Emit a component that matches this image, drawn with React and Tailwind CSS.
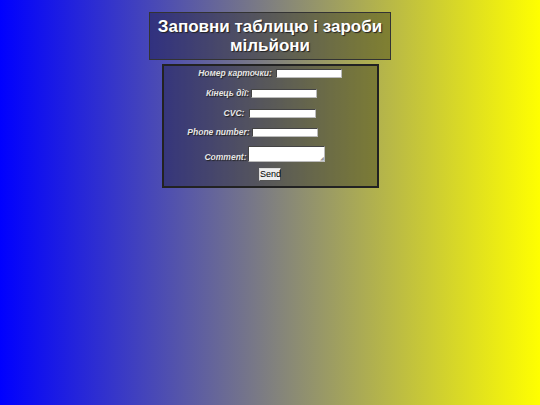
export default function App() {
  const label =
    "text-[8.5px] font-bold italic text-[#e6e6e6] [text-shadow:1px_1px_1px_#222] leading-none";
  const input =
    "h-[9px] bg-white border border-t-[#444] border-l-[#444] border-b-[#bbb] border-r-[#bbb]";
  return (
    <div className="w-[540px] h-[405px] bg-[linear-gradient(to_right,#0000ff,#ffff00)] font-['Liberation_Sans',Arial,sans-serif] flex flex-col items-center pt-[12px]">
      <div className="w-[242px] h-[48px] bg-black/30 border border-[#333] flex flex-col items-center justify-center">
        <h1 className="text-[17px] leading-[19px] font-bold text-white text-center [text-shadow:1px_1px_1px_#222]">
          Заповни таблицю і зароби
          <br />
          мільйони
        </h1>
      </div>
      <div className="w-[217px] h-[124px] mt-[4px] bg-black/30 border-2 border-[#222] flex flex-col items-center pt-[2px]">
        <div className="flex items-center h-[10px]">
          <span className={label + " mr-[4px]"}>Номер карточки:</span>
          <div className={input + " w-[66px]"} />
        </div>
        <div className="flex items-center h-[10px] mt-[10px] mr-[17px]">
          <span className={label + " mr-[2px]"}>Кінець дії:</span>
          <div className={input + " w-[66px]"} />
        </div>
        <div className="flex items-center h-[10px] mt-[10px]">
          <span className={label + " mr-[5px]"}>CVC:</span>
          <div className={input + " w-[67px]"} />
        </div>
        <div className="flex items-center h-[10px] mt-[9px] mr-[35px]">
          <span className={label + " mr-[2px]"}>Phone number:</span>
          <div className={input + " w-[66px]"} />
        </div>
        <div className="flex items-end h-[16px] mt-[9px] mr-[11px]">
          <span className={label + " mr-[1px] mb-[1px]"}>Comment:</span>
          <div className={input + " w-[77px] !h-[16px] relative"}>
            <span className="absolute right-0 bottom-0 text-[5px] leading-none text-[#999]">◢</span>
          </div>
        </div>
        <button className="mt-[6px] h-[13px] w-[22px] bg-[#eee] border border-t-[#ddd] border-l-[#ddd] border-b-[#555] border-r-[#555] text-[9px] leading-none text-black">
          Send
        </button>
      </div>
    </div>
  );
}
